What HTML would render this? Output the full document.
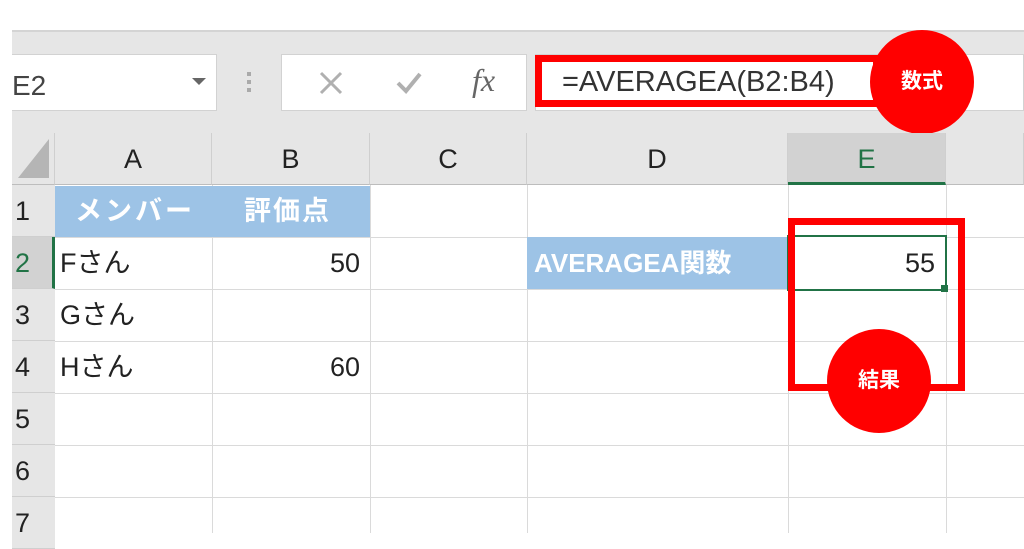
<!DOCTYPE html>
<html><head><meta charset="utf-8"><style>
*{margin:0;padding:0;box-sizing:border-box}
body{width:1024px;height:533px;overflow:hidden;background:#fff;position:relative;font-family:"Liberation Sans","Noto Sans CJK JP",sans-serif}
.a{position:absolute}
.t{position:absolute;font-size:27px;color:#222;line-height:52px}
.vl{position:absolute;width:1px;background:#dadada;top:185px;height:348px}
.hl{position:absolute;height:1px;background:#dadada;left:55px;width:969px}
.rh{position:absolute;left:12px;width:43px;height:52px;background:#e6e6e6;border-bottom:1px solid #cfcfcf;font-size:27px;line-height:52px;padding-left:3px;color:#222}
.ch{position:absolute;top:133px;height:52px;background:#e6e6e6;border-right:1px solid #cfcfcf;border-bottom:1px solid #bdbdbd;text-align:center;font-size:27px;line-height:52px;color:#222}
.circ{position:absolute;width:104px;height:104px;border-radius:50%;background:#f00;color:#fff;font-weight:bold;font-size:21px;text-align:center;line-height:104px}
</style></head><body>
<div class="a" style="left:12px;top:30px;width:1012px;height:155px;background:#e6e6e6;border-top:2px solid #d4d4d4"></div>
<div class="a" style="left:12px;top:54px;width:205px;height:57px;background:#fff;border:1px solid #d2d2d2;border-left:none"></div>
<div class="t" style="left:12px;top:60px;font-size:28px;color:#444">E2</div>
<div class="a" style="left:192px;top:78px;width:0;height:0;border-left:7px solid transparent;border-right:7px solid transparent;border-top:7px solid #666"></div>
<div class="a" style="left:247px;top:72px;width:4px;height:4px;background:#aaa;box-shadow:0 8px 0 #aaa,0 16px 0 #aaa"></div>
<div class="a" style="left:281px;top:54px;width:246px;height:57px;background:#fff;border:1px solid #d2d2d2"></div>
<svg class="a" style="left:318px;top:70px" width="26" height="26"><path d="M3 3L23 23M23 3L3 23" stroke="#b0b0b0" stroke-width="3"/></svg>
<svg class="a" style="left:395px;top:70px" width="28" height="26"><path d="M3 13L11 21L25 4" stroke="#b0b0b0" stroke-width="4" fill="none"/></svg>
<div class="a" style="left:472px;top:62px;font-size:32px;color:#666;font-family:'Liberation Serif',serif;font-style:italic">fx</div>
<div class="a" style="left:535px;top:54px;width:489px;height:57px;background:#fff;border:1px solid #d2d2d2"></div>
<div class="a" style="left:535px;top:55px;width:345px;height:52px;border:7px solid #f00"></div>
<div class="t" style="left:562px;top:56px;font-size:29px;color:#333">=AVERAGEA(B2:B4)</div>
<div class="circ" style="left:870px;top:30px">数式</div>

<div class="a" style="left:12px;top:133px;width:43px;height:52px;background:#e6e6e6;border-right:1px solid #cfcfcf;border-bottom:1px solid #bdbdbd"></div>
<div class="a" style="left:18px;top:139px;width:0;height:0;border-left:31px solid transparent;border-bottom:39px solid #b5b5b5"></div>
<div class="ch" style="left:55px;width:157px">A</div>
<div class="ch" style="left:212px;width:158px">B</div>
<div class="ch" style="left:370px;width:157px">C</div>
<div class="ch" style="left:527px;width:261px">D</div>
<div class="ch" style="left:788px;width:158px;background:#d2d2d2;color:#217346;border-bottom:3px solid #217346">E</div>
<div class="ch" style="left:946px;width:78px"></div>

<div class="rh" style="top:185px">1</div>
<div class="rh" style="top:237px;background:#d2d2d2;color:#217346;border-right:3px solid #217346">2</div>
<div class="rh" style="top:289px">3</div>
<div class="rh" style="top:341px">4</div>
<div class="rh" style="top:393px">5</div>
<div class="rh" style="top:445px">6</div>
<div class="rh" style="top:497px">7</div>

<div class="vl" style="left:212px"></div><div class="vl" style="left:370px"></div><div class="vl" style="left:527px"></div><div class="vl" style="left:788px"></div><div class="vl" style="left:946px"></div>
<div class="hl" style="top:237px"></div><div class="hl" style="top:289px"></div><div class="hl" style="top:341px"></div><div class="hl" style="top:393px"></div><div class="hl" style="top:445px"></div><div class="hl" style="top:497px"></div>

<div class="a" style="left:55px;top:186px;width:315px;height:51px;background:#9dc3e6"></div>
<div class="t" style="left:75px;top:185px;color:#fff;font-weight:bold;letter-spacing:3px">メンバー</div>
<div class="t" style="left:244px;top:185px;color:#fff;font-weight:bold;letter-spacing:2px">評価点</div>
<div class="t" style="left:60px;top:237px">Fさん</div>
<div class="t" style="left:330px;top:237px">50</div>
<div class="t" style="left:60px;top:289px">Gさん</div>
<div class="t" style="left:60px;top:341px">Hさん</div>
<div class="t" style="left:330px;top:341px">60</div>

<div class="a" style="left:527px;top:237px;width:261px;height:52px;background:#9dc3e6"></div>
<div class="t" style="left:534px;top:237px;color:#fff;font-weight:bold;font-size:26px">AVERAGEA関数</div>
<div class="a" style="left:787px;top:235px;width:160px;height:56px;border:2px solid #217346;background:#fff"></div>
<div class="a" style="left:941px;top:285px;width:7px;height:7px;background:#217346"></div>
<div class="t" style="left:905px;top:237px">55</div>
<div class="a" style="left:788px;top:218px;width:177px;height:173px;border:7px solid #f00"></div>
<div class="circ" style="left:827px;top:329px">結果</div>
</body></html>
